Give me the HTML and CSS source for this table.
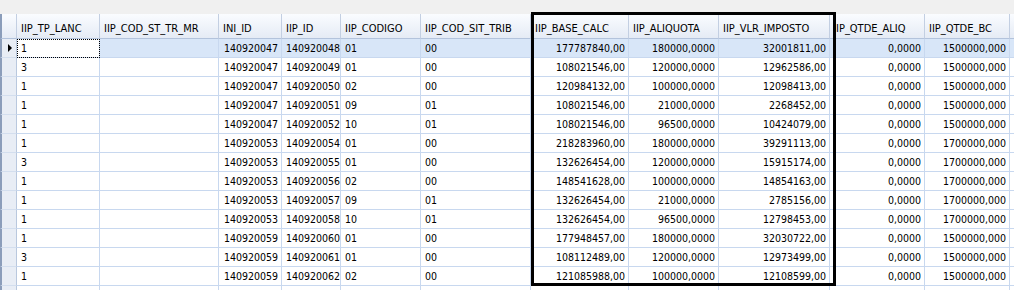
FILE: index.html
```html
<!DOCTYPE html>
<html lang="pt">
<head>
  <meta charset="UTF-8" />
  <title>IIP</title>
  <link rel="stylesheet" href="styles.css">
</head>
<body>
  <div class="grid-wrap">
    <table class="grid">
      <colgroup>
        <col class="c-ind">
        <col class="c-83">
        <col class="c-119">
        <col class="c-63">
        <col class="c-59">
        <col class="c-80">
        <col class="c-110">
        <col class="c-98">
        <col class="c-90">
        <col class="c-111">
        <col class="c-95">
        <col class="c-85">
        <col class="c-rest">
      </colgroup>
      <thead>
        <tr>
          <th class="ind"></th>
          <th>IIP_TP_LANC</th>
          <th>IIP_COD_ST_TR_MR</th>
          <th>INI_ID</th>
          <th>IIP_ID</th>
          <th>IIP_CODIGO</th>
          <th>IIP_COD_SIT_TRIB</th>
          <th>IIP_BASE_CALC</th>
          <th>IIP_ALIQUOTA</th>
          <th>IIP_VLR_IMPOSTO</th>
          <th class="hid">IP_QTDE_ALIQ</th>
          <th>IIP_QTDE_BC</th>
          <th></th>
        </tr>
      </thead>
      <tbody>
        <tr class="sel">
          <td class="ind"><span class="arrow"></span></td>
          <td class="focus">1</td><td></td><td class="num">140920047</td><td>140920048</td><td>01</td><td>00</td>
          <td class="num">177787840,00</td><td class="num">180000,0000</td><td class="num">32001811,00</td><td class="num">0,0000</td><td class="num">1500000,000</td><td></td>
        </tr>
        <tr>
          <td class="ind"></td>
          <td>3</td><td></td><td class="num">140920047</td><td>140920049</td><td>01</td><td>00</td>
          <td class="num">108021546,00</td><td class="num">120000,0000</td><td class="num">12962586,00</td><td class="num">0,0000</td><td class="num">1500000,000</td><td></td>
        </tr>
        <tr>
          <td class="ind"></td>
          <td>1</td><td></td><td class="num">140920047</td><td>140920050</td><td>02</td><td>00</td>
          <td class="num">120984132,00</td><td class="num">100000,0000</td><td class="num">12098413,00</td><td class="num">0,0000</td><td class="num">1500000,000</td><td></td>
        </tr>
        <tr>
          <td class="ind"></td>
          <td>1</td><td></td><td class="num">140920047</td><td>140920051</td><td>09</td><td>01</td>
          <td class="num">108021546,00</td><td class="num">21000,0000</td><td class="num">2268452,00</td><td class="num">0,0000</td><td class="num">1500000,000</td><td></td>
        </tr>
        <tr>
          <td class="ind"></td>
          <td>1</td><td></td><td class="num">140920047</td><td>140920052</td><td>10</td><td>01</td>
          <td class="num">108021546,00</td><td class="num">96500,0000</td><td class="num">10424079,00</td><td class="num">0,0000</td><td class="num">1500000,000</td><td></td>
        </tr>
        <tr>
          <td class="ind"></td>
          <td>1</td><td></td><td class="num">140920053</td><td>140920054</td><td>01</td><td>00</td>
          <td class="num">218283960,00</td><td class="num">180000,0000</td><td class="num">39291113,00</td><td class="num">0,0000</td><td class="num">1700000,000</td><td></td>
        </tr>
        <tr>
          <td class="ind"></td>
          <td>3</td><td></td><td class="num">140920053</td><td>140920055</td><td>01</td><td>00</td>
          <td class="num">132626454,00</td><td class="num">120000,0000</td><td class="num">15915174,00</td><td class="num">0,0000</td><td class="num">1700000,000</td><td></td>
        </tr>
        <tr>
          <td class="ind"></td>
          <td>1</td><td></td><td class="num">140920053</td><td>140920056</td><td>02</td><td>00</td>
          <td class="num">148541628,00</td><td class="num">100000,0000</td><td class="num">14854163,00</td><td class="num">0,0000</td><td class="num">1700000,000</td><td></td>
        </tr>
        <tr>
          <td class="ind"></td>
          <td>1</td><td></td><td class="num">140920053</td><td>140920057</td><td>09</td><td>01</td>
          <td class="num">132626454,00</td><td class="num">21000,0000</td><td class="num">2785156,00</td><td class="num">0,0000</td><td class="num">1700000,000</td><td></td>
        </tr>
        <tr>
          <td class="ind"></td>
          <td>1</td><td></td><td class="num">140920053</td><td>140920058</td><td>10</td><td>01</td>
          <td class="num">132626454,00</td><td class="num">96500,0000</td><td class="num">12798453,00</td><td class="num">0,0000</td><td class="num">1700000,000</td><td></td>
        </tr>
        <tr>
          <td class="ind"></td>
          <td>1</td><td></td><td class="num">140920059</td><td>140920060</td><td>01</td><td>00</td>
          <td class="num">177948457,00</td><td class="num">180000,0000</td><td class="num">32030722,00</td><td class="num">0,0000</td><td class="num">1500000,000</td><td></td>
        </tr>
        <tr>
          <td class="ind"></td>
          <td>3</td><td></td><td class="num">140920059</td><td>140920061</td><td>01</td><td>00</td>
          <td class="num">108112489,00</td><td class="num">120000,0000</td><td class="num">12973499,00</td><td class="num">0,0000</td><td class="num">1500000,000</td><td></td>
        </tr>
        <tr>
          <td class="ind"></td>
          <td>1</td><td></td><td class="num">140920059</td><td>140920062</td><td>02</td><td>00</td>
          <td class="num">121085988,00</td><td class="num">100000,0000</td><td class="num">12108599,00</td><td class="num">0,0000</td><td class="num">1500000,000</td><td></td>
        </tr>
        <tr>
          <td class="ind"></td>
          <td></td><td></td><td></td><td></td><td></td><td></td>
          <td></td><td></td><td></td><td></td><td></td><td></td>
        </tr>
      </tbody>
    </table>

    <!-- moldura preta em volta das colunas de imposto -->
    <div class="highlight"></div>
  </div>
</body>
</html>
```

FILE: styles.css
```css
body {
  margin: 0;
  background-color: #f0f0f0;
  font-family: "DejaVu Sans Condensed", "DejaVu Sans", sans-serif;
  font-stretch: condensed;
  font-size: 10.5px;
  color: #000;
  overflow: hidden;
}

.grid-wrap {
  position: relative;
  width: 1014px;
  height: 290px;
  box-sizing: border-box;
  padding-top: 14px;
  overflow: hidden;
}

.grid {
  border-collapse: separate;
  border-spacing: 0;
  table-layout: fixed;
  width: 1090px;
  background-color: #fff;
}

.c-ind { width: 17px; }
.c-83 { width: 83px; }
.c-119 { width: 119px; }
.c-63 { width: 63px; }
.c-59 { width: 59px; }
.c-80 { width: 80px; }
.c-110 { width: 110px; }
.c-98 { width: 98px; }
.c-90 { width: 90px; }
.c-111 { width: 111px; }
.c-95 { width: 95px; }
.c-85 { width: 85px; }
.c-rest { width: 80px; }

th, td {
  box-sizing: border-box;
  padding: 0 3px 0 4px;
  white-space: nowrap;
  overflow: hidden;
  text-align: left;
  font-weight: normal;
}

th {
  height: 25px;
  padding-top: 5px;
  font-size: 11px;
  background: linear-gradient(#fafcff, #e5ebf5);
  border-right: 1px solid #c3cfe2;
  border-bottom: 1px solid #b3c3dc;
}

th.hid {
  padding-left: 6px;
}

td {
  height: 19px;
  border-right: 1px solid #c8d8ef;
  border-bottom: 1px solid #c8d8ef;
}

td.num {
  text-align: right;
}

.ind {
  padding: 0;
  border-left: 2px solid #8b9dba;
  background-color: #e8edf5;
}

td.ind {
  border-right: 1px solid #b9c8de;
  border-bottom: 1px solid #d3deee;
}

.sel td {
  background-color: #d8e6f8;
}

.sel td.ind {
  background-color: #e8edf5;
}

.sel td.focus {
  background-color: #fff;
  outline: 1px dotted #000;
  outline-offset: -1px;
}

.arrow {
  display: block;
  width: 0;
  height: 0;
  margin-left: 6px;
  border-left: 4px solid #000;
  border-top: 4px solid transparent;
  border-bottom: 4px solid transparent;
}

.highlight {
  position: absolute;
  top: 12px;
  left: 531px;
  width: 305px;
  height: 274px;
  box-sizing: border-box;
  border: 3px solid #000;
}
```
